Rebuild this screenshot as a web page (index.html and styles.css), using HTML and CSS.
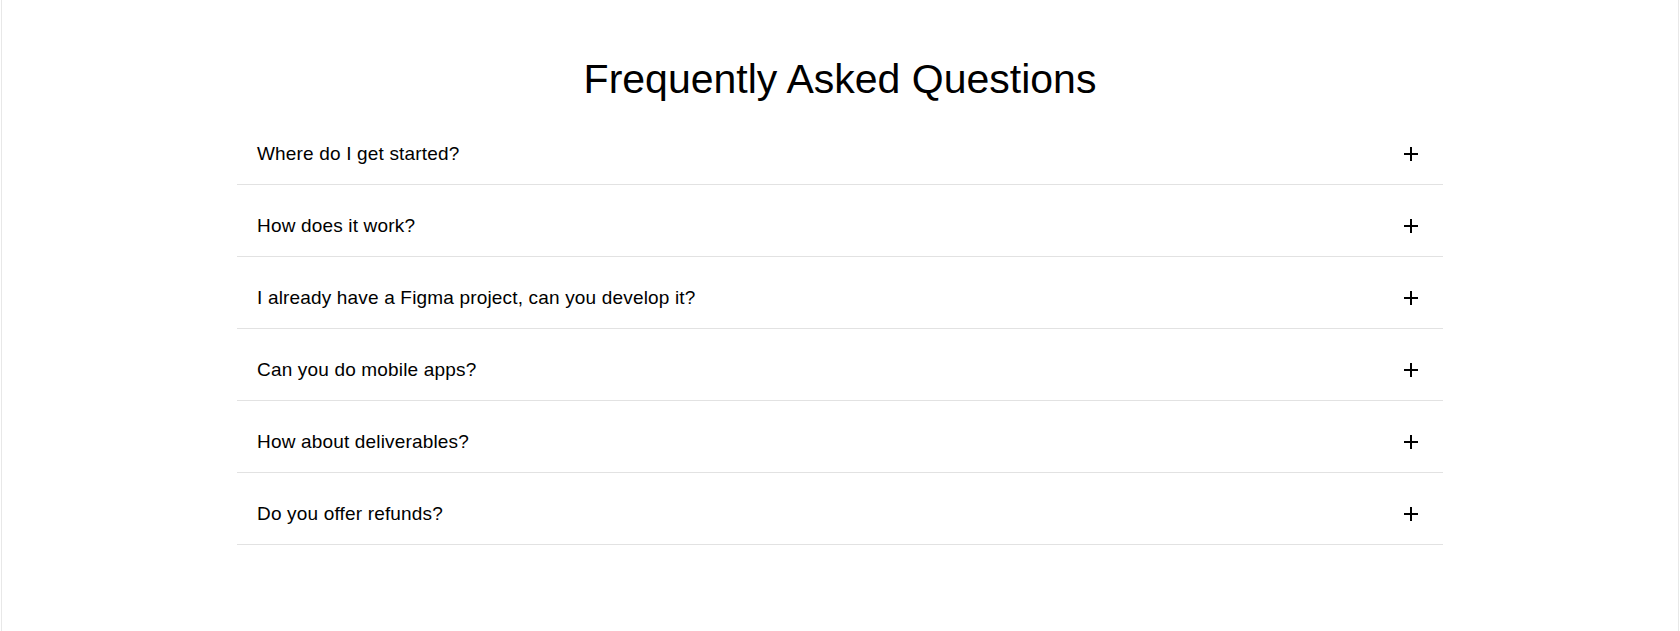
FILE: index.html
```html
<!DOCTYPE html>
<html>
<head>
    <title>FAQ</title>
    <link rel="stylesheet" href="styles.css">
</head>
<body>
    <div class="page">
        <section class="faq">
            <h2 class="faqTitle">Frequently Asked Questions</h2>

            <div class="faqList">
                <div class="faqItem">
                    <span>Where do I get started?</span>
                    <svg class="faqIcon" viewBox="0 0 24 24"><path d="M19 13h-6v6h-2v-6H5v-2h6V5h2v6h6v2z"/></svg>
                </div>
                <div class="faqItem">
                    <span>How does it work?</span>
                    <svg class="faqIcon" viewBox="0 0 24 24"><path d="M19 13h-6v6h-2v-6H5v-2h6V5h2v6h6v2z"/></svg>
                </div>
                <div class="faqItem">
                    <span>I already have a Figma project, can you develop it?</span>
                    <svg class="faqIcon" viewBox="0 0 24 24"><path d="M19 13h-6v6h-2v-6H5v-2h6V5h2v6h6v2z"/></svg>
                </div>
                <div class="faqItem">
                    <span>Can you do mobile apps?</span>
                    <svg class="faqIcon" viewBox="0 0 24 24"><path d="M19 13h-6v6h-2v-6H5v-2h6V5h2v6h6v2z"/></svg>
                </div>
                <div class="faqItem">
                    <span>How about deliverables?</span>
                    <svg class="faqIcon" viewBox="0 0 24 24"><path d="M19 13h-6v6h-2v-6H5v-2h6V5h2v6h6v2z"/></svg>
                </div>
                <div class="faqItem">
                    <span>Do you offer refunds?</span>
                    <svg class="faqIcon" viewBox="0 0 24 24"><path d="M19 13h-6v6h-2v-6H5v-2h6V5h2v6h6v2z"/></svg>
                </div>
            </div>
        </section>
    </div>
</body>
</html>
```

FILE: styles.css
```css
* {
    font-family: "Liberation Sans", Helvetica, Arial, sans-serif;
    box-sizing: border-box;
}
html, body {
    margin: 0;
    height: 100%;
    background: #fff;
    color: #000;
}
.page {
    min-height: 100%;
    margin: 0 1px;
    border-left: 1px solid #e8e8e8;
    border-right: 1px solid #e8e8e8;
}
.faq {
    max-width: 1206px;
    margin: 0 auto;
    padding-top: 55px;
}
.faqTitle {
    margin: 0 0 10px;
    font-size: 41px;
    line-height: 48px;
    font-weight: normal;
    text-align: center;
}
.faqList {
    display: flex;
    flex-direction: column;
}
.faqItem {
    display: flex;
    justify-content: space-between;
    align-items: center;
    padding: 29px 20px 18px;
    border-bottom: 1px solid #e2e2e2;
    font-size: 19px;
    letter-spacing: 0.17px;
    line-height: 24px;
    cursor: pointer;
}
.faqIcon {
    width: 24px;
    height: 24px;
    fill: #000;
}
```
